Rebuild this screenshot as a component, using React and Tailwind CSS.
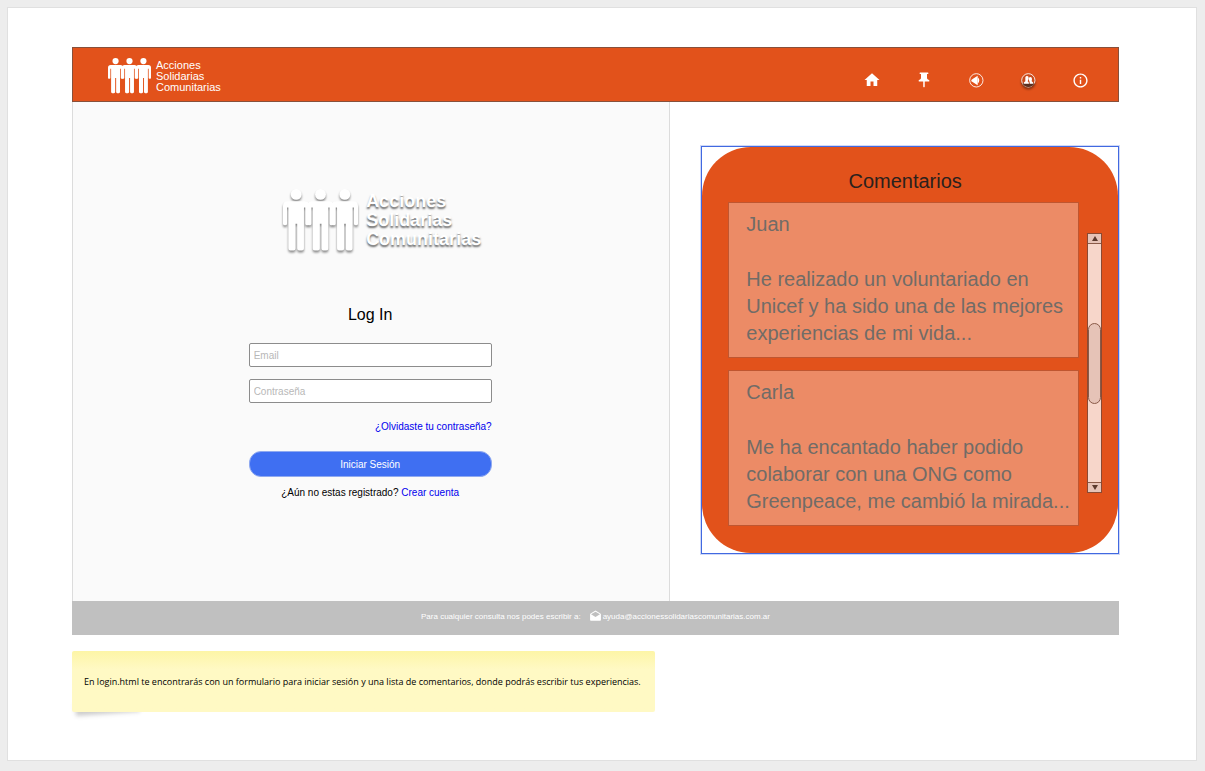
import { MdHome, MdPushPin, MdInfoOutline, MdDrafts } from "react-icons/md";

function Person({ x }) {
  return (
    <g transform={`translate(${x} 0)`}>
      <circle cx="39" cy="16" r="16" />
      <path d="M14 36H64Q78 36 78 50V103Q78 107 74 107H70Q66 107 66 103V55H62V176Q62 182 56 182H48Q42 182 42 176V103H37V176Q37 182 31 182H22Q16 182 16 176V55H12V103Q12 107 8 107H4Q0 107 0 103V50Q0 36 14 36Z" />
    </g>
  );
}

function People({ className }) {
  return (
    <svg viewBox="0 0 222 184" className={className} fill="currentColor" aria-hidden="true">
      <Person x={0} />
      <Person x={72} />
      <Person x={144} />
    </svg>
  );
}

function SpeakerIcon() {
  return (
    <svg viewBox="0 0 45 45" className="size-[15px]" aria-hidden="true">
      <circle cx="22" cy="22" r="20" fill="none" stroke="currentColor" strokeWidth="2.6" />
      <path d="M7 21L12 17L26 8V37L12 28L7 25Z" fill="currentColor" />
      <path d="M26 13Q36 22 26 32Z" fill="currentColor" />
    </svg>
  );
}

function CommunityIcon() {
  return (
    <svg viewBox="0 0 45 45" className="size-[15px] drop-shadow-[0_2px_1px_rgba(0,0,0,0.4)]" aria-hidden="true">
      <circle cx="22" cy="22" r="20" fill="#c94a1b" stroke="currentColor" strokeWidth="2.6" />
      <path d="M4 31H41Q36 42 22 42Q9 42 4 31Z" fill="#5c3020" />
      <path d="M8 32Q8 27 13 25V13Q15 8 19 9Q24 10 23 17L20 25Q24 27 24 32Z" fill="currentColor" />
      <path d="M26 32V27L24 22Q22 13 28 12Q33 12 33 18L32 25Q37 27 37 32Z" fill="currentColor" />
    </svg>
  );
}

const links = [
  { name: "Inicio", icon: <MdHome size={18} /> },
  { name: "Destacados", icon: <MdPushPin size={18} /> },
  { name: "Novedades", icon: <SpeakerIcon /> },
  { name: "Comunidad", icon: <CommunityIcon /> },
  { name: "Información", icon: <MdInfoOutline size={17} /> },
];

const comments = [
  { name: "Juan", text: "He realizado un voluntariado en Unicef y ha sido una de las mejores experiencias de mi vida..." },
  { name: "Carla", text: "Me ha encantado haber podido colaborar con una ONG como Greenpeace, me cambió la mirada..." },
];

function Header() {
  return (
    <header className="flex h-[55px] items-center justify-between border border-[#87503b] bg-[#e2521b] pr-7 pl-[35px] text-white">
      <a href="#inicio" className="flex items-center gap-[5px] pt-[3px]">
        <People className="w-[43px]" />
        <span className="text-[11px] leading-[11px]">
          Acciones<br />Solidarias<br />Comunitarias
        </span>
      </a>
      <nav className="flex gap-8 pt-[11px]">
        {links.map((l) => (
          <a key={l.name} href={`#${l.name.toLowerCase()}`} aria-label={l.name} className="flex size-5 items-center justify-center">
            {l.icon}
          </a>
        ))}
      </nav>
    </header>
  );
}

function Login() {
  const field = "h-6 w-full rounded-[2px] border border-[#8c8c8c] bg-white px-1 text-[10px] placeholder:text-[#b8b8b8]";
  return (
    <section className="flex flex-col items-center border-x border-[#dcdcdc] bg-[#fafafa] pt-[87px] pr-[2px] pb-[100px]">
      <div className="ml-6 flex items-center gap-2 text-white">
        <People className="w-[75px] drop-shadow-[0_2px_1px_rgba(0,0,0,0.45)]" />
        <p className="text-[18px] leading-[19px] font-bold [text-shadow:0_2px_2px_rgba(0,0,0,0.6)]">
          Acciones<br />Solidarias<br />Comunitarias
        </p>
      </div>
      <form className="mt-[52px] flex w-[243px] flex-col text-[10px]" onSubmit={(e) => e.preventDefault()}>
        <h1 className="text-center text-base leading-6">Log In</h1>
        <input type="email" aria-label="Email" placeholder="Email" className={`${field} mt-4`} />
        <input type="password" aria-label="Contraseña" placeholder="Contraseña" className={`${field} mt-3`} />
        <a href="#recuperar" className="mt-4 self-end leading-4 text-[#0000ee]">¿Olvidaste tu contraseña?</a>
        <button type="submit" className="mt-4 h-[26px] rounded-xl border border-[#8fa9f0] bg-[#3f6ff2] text-white">Iniciar Sesión</button>
        <p className="mt-2 text-center leading-4">
          ¿Aún no estas registrado? <a href="#registro" className="text-[#0000ee]">Crear cuenta</a>
        </p>
      </form>
    </section>
  );
}

function ScrollBar() {
  const arrow = "flex h-[10px] w-full items-center justify-center bg-[#e6c3b7] text-[#5c3a2e]";
  return (
    <div className="mt-[31px] flex h-[260px] w-[15px] flex-col border border-[#8a4a33] bg-[#f7d6ca]">
      <button type="button" aria-label="Subir" className={`${arrow} border-b border-[#8a5a48]`}>
        <svg viewBox="0 0 6 5" className="h-[5px] w-[6px]" fill="currentColor"><path d="M3 0L6 5H0Z" /></svg>
      </button>
      <div className="flex flex-1 flex-col pt-[79px]">
        <div className="h-[81px] rounded-full border border-[#8a5a48] bg-[#e6c3b7]" />
      </div>
      <button type="button" aria-label="Bajar" className={`${arrow} border-t border-[#8a5a48]`}>
        <svg viewBox="0 0 6 5" className="h-[5px] w-[6px]" fill="currentColor"><path d="M3 5L6 0H0Z" /></svg>
      </button>
    </div>
  );
}

function Comments() {
  return (
    <section className="border border-[#4169e1] shadow-[0_0_0_1px_rgba(65,105,225,0.25)]">
      <div className="rounded-[49px] bg-[#e2521b] pt-5 pr-4 pb-[27px] pl-[26px] text-[20px]">
        <h2 className="pr-5 text-center leading-7 text-[#2b211d]">Comentarios</h2>
        <div className="mt-[7px] flex gap-2">
          <ul className="flex flex-1 flex-col gap-3">
            {comments.map((c) => (
              <li key={c.name} className="border border-[#bf5630] bg-[#ec8b66] pt-2 pr-[2px] pb-[10px] pl-[17px] leading-[27px] text-[#716c67]">
                <h3 className="mb-7">{c.name}</h3>
                <p>{c.text}</p>
              </li>
            ))}
          </ul>
          <ScrollBar />
        </div>
      </div>
    </section>
  );
}

export default function App() {
  return (
    <div className="min-h-screen bg-[#ededed] pt-[7px] pr-2 pb-[10px] pl-[7px] font-['Liberation_Sans',Arial,sans-serif] text-black">
      <div className="border border-[#e0e0e0] bg-white pt-[39px] pr-[77px] pb-12 pl-16">
        <Header />
        <main className="grid grid-cols-[4fr_3fr]">
          <Login />
          <div className="pt-11 pl-[31px]">
            <Comments />
          </div>
        </main>
        <footer className="flex h-[34px] items-center justify-center bg-[#c0c0c0] pb-[3px] text-[8px] text-white">
          <span>Para cualquier consulta nos podes escribir a:</span>
          <a href="mailto:ayuda@accionessolidariascomunitarias.com.ar" className="ml-2 flex items-center gap-px">
            <MdDrafts size={13} />
            ayuda@accionessolidariascomunitarias.com.ar
          </a>
        </footer>
        <aside className="relative isolate mt-4 w-fit">
          <div className="absolute -bottom-1 left-1 -z-10 h-3 w-16 origin-bottom-left -rotate-4 bg-black/20 blur-[2px]" />
          <p className="rounded-[2px] bg-linear-to-b from-[#fdf5a6] to-[#fff9c4] to-30% py-[22px] pr-[14px] pl-3 font-['Open_Sans',sans-serif] text-[9px] leading-[17px]">
            En login.html te encontrarás con un formulario para iniciar sesión y una lista de comentarios, donde podrás escribir tus experiencias.
          </p>
        </aside>
      </div>
    </div>
  );
}
